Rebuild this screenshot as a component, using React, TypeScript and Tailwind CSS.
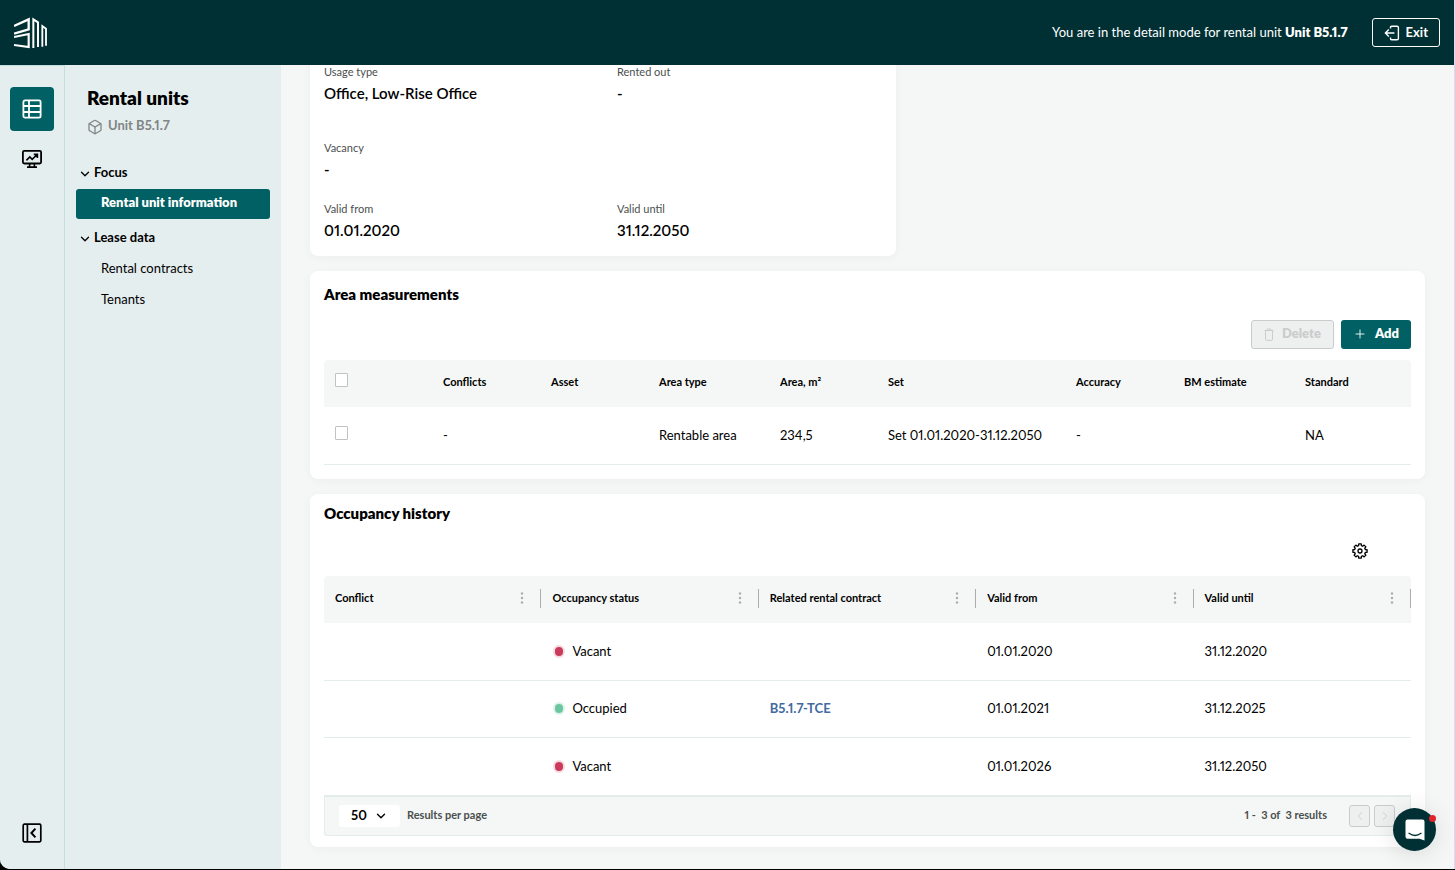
import type { ReactNode } from "react";
import { Box, ChevronDown, ChevronLeft, ChevronRight, Plus } from "lucide-react";

function Logo() {
  return (
    <svg width="34" height="32" viewBox="0 0 102 96" fill="none" stroke="white" aria-hidden="true">
      <path d="M0 27 L44 7 V37 L0 50" strokeWidth="7" />
      <path d="M0 60 L44 51 V90 L0 84" strokeWidth="6.5" />
      <path d="M58 93 V7 L72 16 V90" strokeWidth="6" />
      <path d="M85 89 V27 L96 35 V86" strokeWidth="5.5" />
    </svg>
  );
}

function TableIcon() {
  return (
    <svg width="20" height="20" viewBox="0 0 20 20" fill="none" stroke="currentColor" strokeWidth="1.8" aria-hidden="true">
      <rect x="1.4" y="1.4" width="17.2" height="17.2" rx="1.6" />
      <path d="M7 1.4V18.6M1.4 7H18.6M1.4 13H18.6" />
    </svg>
  );
}

function MonitorIcon() {
  return (
    <svg width="22" height="20" viewBox="0 0 22 20" fill="none" stroke="currentColor" strokeWidth="1.8" aria-hidden="true">
      <rect x="1.9" y="1.9" width="18.2" height="12.6" rx="1.4" />
      <path d="M8.6 14.5V17.6M13.4 14.5V17.6M6 18.1H16M5.4 11.4L8.8 8L11.2 10.4L15.6 6M12.8 5.4H16.4V9" strokeWidth="1.6" />
    </svg>
  );
}

function CollapseIcon() {
  return (
    <svg width="20" height="20" viewBox="0 0 20 20" fill="none" stroke="currentColor" strokeWidth="1.7" aria-hidden="true">
      <rect x="1.2" y="1.2" width="17.6" height="17.6" rx="1.2" />
      <path d="M5.4 1.2V18.8" />
      <path d="M13.4 5.6L9.4 10L13.4 14.4" strokeWidth="2" />
    </svg>
  );
}

function ExitIcon() {
  return (
    <svg width="16" height="16" viewBox="0 0 16 16" fill="none" stroke="currentColor" strokeWidth="1.4" aria-hidden="true">
      <path d="M6.5 3.6V2.4Q6.5 1.2 7.7 1.2H13Q14.4 1.2 14.4 2.6V13.4Q14.4 14.8 13 14.8H7.7Q6.5 14.8 6.5 13.6V12.4" />
      <path d="M10.4 8H1.6M4.8 4.6L1.4 8L4.8 11.4" />
    </svg>
  );
}

function TrashIcon() {
  return (
    <svg width="10" height="13" viewBox="0 0 10 13" fill="none" stroke="currentColor" strokeWidth="1" aria-hidden="true">
      <path d="M0.5 2.5H9.5M3.3 2.5V1H6.7V2.5M1.5 2.5V11.5Q1.5 12.3 2.3 12.3H7.7Q8.5 12.3 8.5 11.5V2.5" />
    </svg>
  );
}

const gearPoints = Array.from({ length: 8 }, (_, tooth) =>
  [
    [-15, 5.5],
    [-10, 7.2],
    [10, 7.2],
    [15, 5.5],
  ].map(([offset, radius]) => {
    const angle = ((tooth * 45 + offset) * Math.PI) / 180;
    return `${(8 + radius * Math.sin(angle)).toFixed(2)},${(8 - radius * Math.cos(angle)).toFixed(2)}`;
  }),
)
  .flat()
  .join(" ");

function GearIcon() {
  return (
    <svg width="16" height="16" viewBox="0 0 16 16" fill="none" stroke="currentColor" strokeWidth="1.3" strokeLinejoin="round" aria-hidden="true">
      <polygon points={gearPoints} />
      <circle cx="8" cy="8" r="2" />
    </svg>
  );
}

function DotsIcon() {
  return (
    <svg width="4" height="12" viewBox="0 0 4 12" fill="currentColor" aria-hidden="true">
      <circle cx="2" cy="1.5" r="1.2" />
      <circle cx="2" cy="6" r="1.2" />
      <circle cx="2" cy="10.5" r="1.2" />
    </svg>
  );
}

function ChatIcon() {
  return (
    <svg width="20" height="22" viewBox="0 0 20 22" aria-hidden="true">
      <path d="M2.5 0.5H17.5Q19.5 0.5 19.5 2.5V21.5L14.5 19.8H2.5Q0.5 19.8 0.5 17.8V2.5Q0.5 0.5 2.5 0.5Z" fill="white" />
      <path d="M4 14.3Q10 18.7 16 14.3" fill="none" stroke="#003033" strokeWidth="1.3" strokeLinecap="round" />
    </svg>
  );
}

function Field({ label, value }: { label: string; value: string }) {
  return (
    <div className="flex flex-col gap-[5px]">
      <dt className="text-[11px] leading-3 text-[#4a4f4f]">{label}</dt>
      <dd className="text-[15px] leading-5 font-semibold">{value}</dd>
    </div>
  );
}

function Card({ className, children }: { className: string; children: ReactNode }) {
  return <section className={`shrink-0 rounded-lg bg-white px-3.5 shadow-[0_2px_8px_rgba(0,40,40,0.04)] ${className}`}>{children}</section>;
}

const areaColumns = [
  { label: "Conflicts", width: 108, value: "-" },
  { label: "Asset", width: 108, value: "" },
  { label: "Area type", width: 121, value: "Rentable area" },
  { label: "Area, m²", width: 108, value: "234,5" },
  { label: "Set", width: 188, value: "Set 01.01.2020-31.12.2050" },
  { label: "Accuracy", width: 108, value: "-" },
  { label: "BM estimate", width: 121, value: "" },
  { label: "Standard", width: 117, value: "NA" },
];

const historyColumns = ["Conflict", "Occupancy status", "Related rental contract", "Valid from", "Valid until"];

const history = [
  { vacant: true, contract: "", from: "01.01.2020", until: "31.12.2020" },
  { vacant: false, contract: "B5.1.7-TCE", from: "01.01.2021", until: "31.12.2025" },
  { vacant: true, contract: "", from: "01.01.2026", until: "31.12.2050" },
];

const checkboxClass = "block h-3.5 w-[13px] appearance-none rounded-[1px] border border-[#bfc3c3] bg-white checked:bg-[#006063]";

function NavHeading({ children }: { children: string }) {
  return (
    <button type="button" className="flex h-[30px] items-center gap-0.5 pl-0.5 text-[13px] font-bold">
      <ChevronDown className="size-3.5 translate-y-px" strokeWidth={2.2} />
      {children}
    </button>
  );
}

function NavLink({ active, children }: { active?: boolean; children: string }) {
  return (
    <a
      href="#"
      aria-current={active ? "page" : undefined}
      className={`flex h-[30px] items-center rounded-[3px] pl-[25px] text-[13px] ${active ? "bg-[#006063] pb-0.5 font-extrabold text-white" : ""}`}
    >
      {children}
    </a>
  );
}

export default function App() {
  return (
    <div className="h-screen border-b border-black bg-black font-[Lato,sans-serif] text-[13px] text-black proportional-nums">
      <div className="flex h-full flex-col overflow-hidden rounded-bl-[10px] border-r border-[#cfe0f7] bg-[#f5f7f6]">
        <header className="flex h-[65px] shrink-0 items-center justify-between bg-[#003033] px-3.5 text-white">
          <Logo />
          <div className="flex items-center gap-6">
            <p>
              You are in the detail mode for rental unit <strong className="font-extrabold">Unit B5.1.7</strong>
            </p>
            <button type="button" className="flex h-[29px] items-center gap-1.5 rounded-[3px] border border-white px-[11px] font-bold">
              <ExitIcon />
              Exit
            </button>
          </div>
        </header>

        <div className="flex min-h-0 flex-1">
          <nav aria-label="Modules" className="flex w-[65px] shrink-0 flex-col items-center border-t border-r border-[#c5dfe0] bg-[#e5eeef] pt-[21px] pb-[26px]">
            <button type="button" aria-label="Data" className="flex size-11 items-center justify-center rounded bg-[#006063] text-white">
              <TableIcon />
            </button>
            <button type="button" aria-label="Analytics" className="mt-[18px]">
              <MonitorIcon />
            </button>
            <button type="button" aria-label="Collapse sidebar" className="mt-auto">
              <CollapseIcon />
            </button>
          </nav>

          <aside className="w-[216px] shrink-0 bg-[#e5eeef] px-[11px] pt-[21px]">
            <h1 className="pl-[11px] text-[19px] leading-6 font-extrabold">Rental units</h1>
            <p className="mt-2 flex h-4 items-center gap-[5px] pl-[11px] font-bold text-[#7f8484]">
              <Box className="size-4 translate-y-px" strokeWidth={1.9} />
              Unit B5.1.7
            </p>
            <div className="mt-6 flex flex-col gap-px">
              <NavHeading>Focus</NavHeading>
              <NavLink active>Rental unit information</NavLink>
            </div>
            <div className="mt-1 flex flex-col gap-px">
              <NavHeading>Lease data</NavHeading>
              <NavLink>Rental contracts</NavLink>
              <NavLink>Tenants</NavLink>
            </div>
          </aside>

          <main className="flex min-w-0 flex-1 flex-col justify-end gap-[15px] overflow-hidden px-[29px] pb-[22px]">
            <Card className="w-[586px] max-w-full pt-3.5 pb-4">
              <dl className="grid grid-cols-2 gap-x-7">
                <Field label="Usage type" value="Office, Low-Rise Office" />
                <Field label="Rented out" value="-" />
                <div className="col-span-2 mt-[39px] mb-6">
                  <Field label="Vacancy" value="-" />
                </div>
                <Field label="Valid from" value="01.01.2020" />
                <Field label="Valid until" value="31.12.2050" />
              </dl>
            </Card>

            <Card className="pt-[13px] pb-3.5">
              <h2 className="text-[15px] leading-5 font-extrabold">Area measurements</h2>
              <div className="mt-4 flex justify-end gap-[7px] font-extrabold">
                <button type="button" disabled className="flex h-[29px] items-center gap-2 rounded-[3px] border border-[#c9cccc] bg-[#eef0f0] px-3 text-[#cacdcd]">
                  <TrashIcon />
                  Delete
                </button>
                <button type="button" className="flex h-[29px] items-center gap-2 rounded-[3px] bg-[#006063] px-3 text-white">
                  <Plus className="size-3.5" strokeWidth={1.5} />
                  Add
                </button>
              </div>
              <table className="mt-[11px] w-full table-fixed text-left">
                <colgroup>
                  <col style={{ width: 108 }} />
                  {areaColumns.map((c) => (
                    <col key={c.label} style={{ width: c.width }} />
                  ))}
                </colgroup>
                <thead>
                  <tr className="h-[47px] bg-[#f5f7f6] text-[11px]">
                    <th className="rounded-tl pb-1.5 pl-[11px]">
                      <input type="checkbox" aria-label="Select all rows" className={checkboxClass} />
                    </th>
                    {areaColumns.map((c) => (
                      <th key={c.label} className="pb-0.5 pl-[11px] font-bold last:rounded-tr">
                        {c.label}
                      </th>
                    ))}
                  </tr>
                </thead>
                <tbody>
                  <tr className="h-[58px] border-b border-[#e2edec]">
                    <td className="pb-1 pl-[11px]">
                      <input type="checkbox" aria-label="Select row" className={checkboxClass} />
                    </td>
                    {areaColumns.map((c) => (
                      <td key={c.label} className="pl-[11px] whitespace-nowrap">
                        {c.value}
                      </td>
                    ))}
                  </tr>
                </tbody>
              </table>
            </Card>

            <Card className="pt-[9px] pb-[11px]">
              <h2 className="text-[15px] leading-5 font-extrabold">Occupancy history</h2>
              <div className="mt-5 flex justify-end pr-[43px]">
                <button type="button" aria-label="Table settings">
                  <GearIcon />
                </button>
              </div>
              <table className="mt-[17px] w-full table-fixed text-left">
                <thead>
                  <tr className="h-[47px] bg-[#f5f7f6] text-[11px]">
                    {historyColumns.map((label) => (
                      <th key={label} className="pb-[3px] pl-[11px] font-bold first:rounded-tl last:rounded-tr">
                        <div className="flex h-[19px] items-center justify-between border-r border-[#a9adad] pr-4">
                          {label}
                          <button type="button" aria-label={`${label} menu`} className="text-[#a9adad]">
                            <DotsIcon />
                          </button>
                        </div>
                      </th>
                    ))}
                  </tr>
                </thead>
                <tbody>
                  {history.map((row) => (
                    <tr key={row.from} className="h-[57px] border-b border-[#e2edec] last:h-[58px] last:border-b-0">
                      <td />
                      <td className="pl-3">
                        <span className="flex items-center gap-[7px]">
                          <span
                            className={`h-[13px] w-[12px] rounded-full border-2 ${row.vacant ? "border-[#f6dbe1] bg-[#c93a5b]" : "border-[#def3ea] bg-[#6cc5a1]"}`}
                          />
                          {row.vacant ? "Vacant" : "Occupied"}
                        </span>
                      </td>
                      <td className="pl-[11px] font-bold text-[#426a9f]">{row.contract && <a href="#">{row.contract}</a>}</td>
                      <td className="pl-[11px]">{row.from}</td>
                      <td className="pl-[11px]">{row.until}</td>
                    </tr>
                  ))}
                </tbody>
              </table>
              <div className="flex h-[41px] items-center justify-between rounded-b-[3px] border border-t-2 border-[#e2edec] bg-[#f5f7f6] pr-[15px] pb-px pl-3.5 text-[11px] font-bold text-[#4a4f4f]">
                <div className="flex items-center gap-[7px]">
                  <span className="relative flex items-center">
                    <select
                      id="page-size"
                      defaultValue="50"
                      className="h-[22px] w-[61px] appearance-none rounded-[3px] bg-white pl-3 text-[13px] font-bold text-black"
                    >
                      <option>50</option>
                      <option>100</option>
                    </select>
                    <ChevronDown className="pointer-events-none absolute right-3 size-3.5 text-black" strokeWidth={2.4} />
                  </span>
                  <label htmlFor="page-size">Results per page</label>
                </div>
                <div className="flex items-center gap-1">
                  <p className="mr-[18px] whitespace-pre">1 -  3 of  3 results</p>
                  <button type="button" disabled aria-label="Previous page" className="flex h-[22px] w-[21px] items-center justify-center rounded-[3px] border border-[#c9cccc] bg-[#eef0f0] text-[#cacdcd]">
                    <ChevronLeft className="size-3.5" strokeWidth={1.5} />
                  </button>
                  <button type="button" disabled aria-label="Next page" className="flex h-[22px] w-[21px] items-center justify-center rounded-[3px] border border-[#c9cccc] bg-[#eef0f0] text-[#cacdcd]">
                    <ChevronRight className="size-3.5" strokeWidth={1.5} />
                  </button>
                </div>
              </div>
            </Card>
          </main>
        </div>
      </div>

      <button
        type="button"
        aria-label="Open chat"
        className="fixed right-[19px] bottom-[19px] flex size-[43px] items-center justify-center rounded-full bg-[#003033] shadow-[0_2px_24px_rgba(0,0,0,0.12)]"
      >
        <ChatIcon />
        <span className="absolute top-[7px] right-0 size-[7px] rounded-full bg-[#e0242b]" />
      </button>
    </div>
  );
}
